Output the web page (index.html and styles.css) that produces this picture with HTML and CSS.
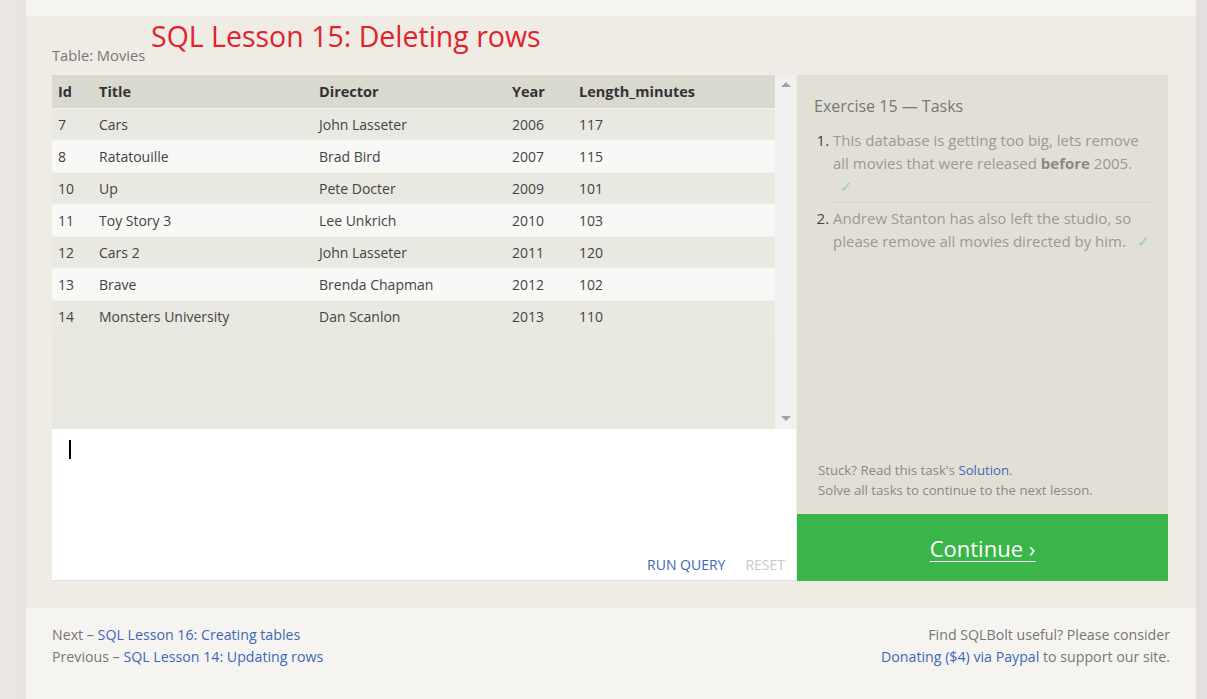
FILE: index.html
```html
<!DOCTYPE html>
<html>
<head>
<meta charset="utf-8">
<link rel="stylesheet" href="styles.css">
</head>
<body>
<div class="page">
  <div class="top-band"></div>
  <section class="lesson">
    <h1 class="lesson-title">SQL Lesson 15: Deleting rows</h1>
    <div class="table-label">Table: Movies</div>
    <div class="workspace">
      <div class="left-col">
        <div class="table-wrap">
          <div class="table-scroll">
            <table class="movies">
              <thead>
                <tr><th class="c-id">Id</th><th class="c-title">Title</th><th class="c-dir">Director</th><th class="c-year">Year</th><th>Length_minutes</th></tr>
              </thead>
              <tbody>
                <tr><td>7</td><td>Cars</td><td>John Lasseter</td><td>2006</td><td>117</td></tr>
                <tr><td>8</td><td>Ratatouille</td><td>Brad Bird</td><td>2007</td><td>115</td></tr>
                <tr><td>10</td><td>Up</td><td>Pete Docter</td><td>2009</td><td>101</td></tr>
                <tr><td>11</td><td>Toy Story 3</td><td>Lee Unkrich</td><td>2010</td><td>103</td></tr>
                <tr><td>12</td><td>Cars 2</td><td>John Lasseter</td><td>2011</td><td>120</td></tr>
                <tr><td>13</td><td>Brave</td><td>Brenda Chapman</td><td>2012</td><td>102</td></tr>
                <tr><td>14</td><td>Monsters University</td><td>Dan Scanlon</td><td>2013</td><td>110</td></tr>
              </tbody>
            </table>
          </div>
          <div class="scrollbar">
            <span class="arrow up"></span>
            <span class="arrow down"></span>
          </div>
        </div>
        <div class="editor">
          <div class="caret"></div>
          <div class="editor-actions">
            <span class="run">RUN QUERY</span>
            <span class="reset">RESET</span>
          </div>
        </div>
      </div>
      <div class="right-col">
        <div class="tasks">
          <h3 class="tasks-title">Exercise 15 — Tasks</h3>
          <ol class="task-list">
            <li>This database is getting too big, lets remove all movies that were released <b>before</b> 2005. <span class="check">✓</span></li>
            <li>Andrew Stanton has also left the studio, so please remove all movies directed by him. <span class="check">✓</span></li>
          </ol>
          <div class="help">
            <div>Stuck? Read this task's <a href="#">Solution</a>.</div>
            <div>Solve all tasks to continue to the next lesson.</div>
          </div>
        </div>
        <a class="continue" href="#">Continue ›</a>
      </div>
    </div>
  </section>
  <footer class="footer">
    <div class="nav">
      <div>Next – <a href="#">SQL Lesson 16: Creating tables</a></div>
      <div>Previous – <a href="#">SQL Lesson 14: Updating rows</a></div>
    </div>
    <div class="donate">
      <div>Find SQLBolt useful? Please consider</div>
      <div><a href="#">Donating ($4) via Paypal</a> to support our site.</div>
    </div>
  </footer>
</div>
</body>
</html>
```

FILE: styles.css
```css
html, body {
  margin: 0;
  padding: 0;
}
body {
  background: linear-gradient(to right, #ebe8e5 0, #e6e3e0 26px, #e3dfde 100%);
  font-family: "Open Sans", "Liberation Sans", sans-serif;
  color: #666;
  height: 699px;
  overflow: hidden;
}
.page {
  margin: 0 11px 0 26px;
  width: 1170px;
}
.top-band {
  height: 16px;
  background: #f5f4f1;
}
.lesson {
  position: relative;
  background: #efece5;
  height: 592px;
  box-sizing: border-box;
  padding: 0 28px 27px 26px;
}
.lesson-title {
  position: absolute;
  left: 125px;
  top: 0;
  margin: 0;
  font-weight: normal;
  font-size: 28.5px;
  line-height: 40px;
  color: #e1232b;
}
.table-label {
  height: 59px;
  box-sizing: border-box;
  padding-top: 28px;
  font-size: 14.7px;
  line-height: 22px;
  color: #777;
}
.workspace {
  display: flex;
}
.left-col {
  width: 744px;
  display: flex;
  flex-direction: column;
}
.table-wrap {
  height: 354px;
  display: flex;
  background: #e8e7e0;
}
.table-scroll {
  flex: 1;
}
.movies {
  width: 100%;
  border-collapse: collapse;
  font-size: 14px;
  color: #444;
}
.movies th {
  background: #dad9cf;
  text-align: left;
  font-weight: bold;
  color: #333;
  font-size: 14.5px;
  height: 33px;
  padding: 0 6px;
}
.movies td {
  height: 31px;
  padding: 0 6px;
  border-top: 1px solid #f3f2ee;
}
.movies tbody tr:nth-child(odd) td {
  background: #e9e8e1;
}
.movies tbody tr:nth-child(even) td {
  background: #f8f8f6;
}
.c-id { width: 29px; }
.c-title { width: 208px; }
.c-dir { width: 181px; }
.c-year { width: 55px; }
.scrollbar {
  width: 21px;
  background: #f1f1f1;
  display: flex;
  flex-direction: column;
  justify-content: space-between;
  align-items: center;
  padding: 7px 0 8px;
  box-sizing: border-box;
}
.arrow {
  width: 0;
  height: 0;
  border-left: 5px solid transparent;
  border-right: 5px solid transparent;
}
.arrow.up {
  border-bottom: 5px solid #a3a3a3;
}
.arrow.down {
  border-top: 5px solid #a3a3a3;
}
.editor {
  height: 152px;
  background: #fff;
  box-sizing: border-box;
  padding: 11px 11px 5px 17px;
  display: flex;
  flex-direction: column;
  justify-content: space-between;
  border-bottom: 1px solid #e4e2dd;
}
.caret {
  width: 2px;
  height: 19px;
  background: #000;
}
.editor-actions {
  display: flex;
  justify-content: flex-end;
  gap: 20px;
  font-size: 14px;
  line-height: 20px;
}
.run { color: #3d67b8; }
.reset { color: #c8c8c8; }
.right-col {
  width: 371px;
  margin-left: 1px;
  display: flex;
  flex-direction: column;
}
.tasks {
  height: 439px;
  box-sizing: border-box;
  background: #e2e0d6;
  padding: 20px 17px 14px 17px;
  display: flex;
  flex-direction: column;
}
.tasks-title {
  margin: 0 0 12px;
  font-size: 16px;
  font-weight: normal;
  line-height: 22px;
  color: #777;
}
.task-list {
  margin: 0;
  padding: 0 0 0 19px;
  font-size: 15px;
  line-height: 23px;
  color: #999;
  flex: 1;
}
.task-list li {
  padding: 0 0 4px;
}
.task-list li::marker {
  color: #444;
}
.task-list li + li {
  border-top: 1px solid #d4d2c8;
  padding-top: 4px;
}
.task-list b {
  color: #888;
}
.check {
  display: inline-block;
  color: #9ccf9c;
  margin-left: 7px;
}
.help {
  font-size: 13.2px;
  line-height: 20px;
  color: #888;
  padding-left: 4px;
}
.help a {
  color: #3d67b8;
  text-decoration: none;
}
.continue {
  height: 67px;
  background: #3ab54a;
  color: #fff;
  font-size: 22px;
  display: flex;
  align-items: center;
  justify-content: center;
  text-decoration: underline;
  text-decoration-thickness: 1px;
  text-underline-offset: 4px;
}
.footer {
  height: 91px;
  background: #f5f4f1;
  box-sizing: border-box;
  padding: 16px 26px 0 26px;
  display: flex;
  justify-content: space-between;
  font-size: 14.2px;
  line-height: 22px;
  color: #777;
}
.footer a {
  color: #3d67b8;
  text-decoration: none;
}
.donate {
  text-align: right;
}
```
